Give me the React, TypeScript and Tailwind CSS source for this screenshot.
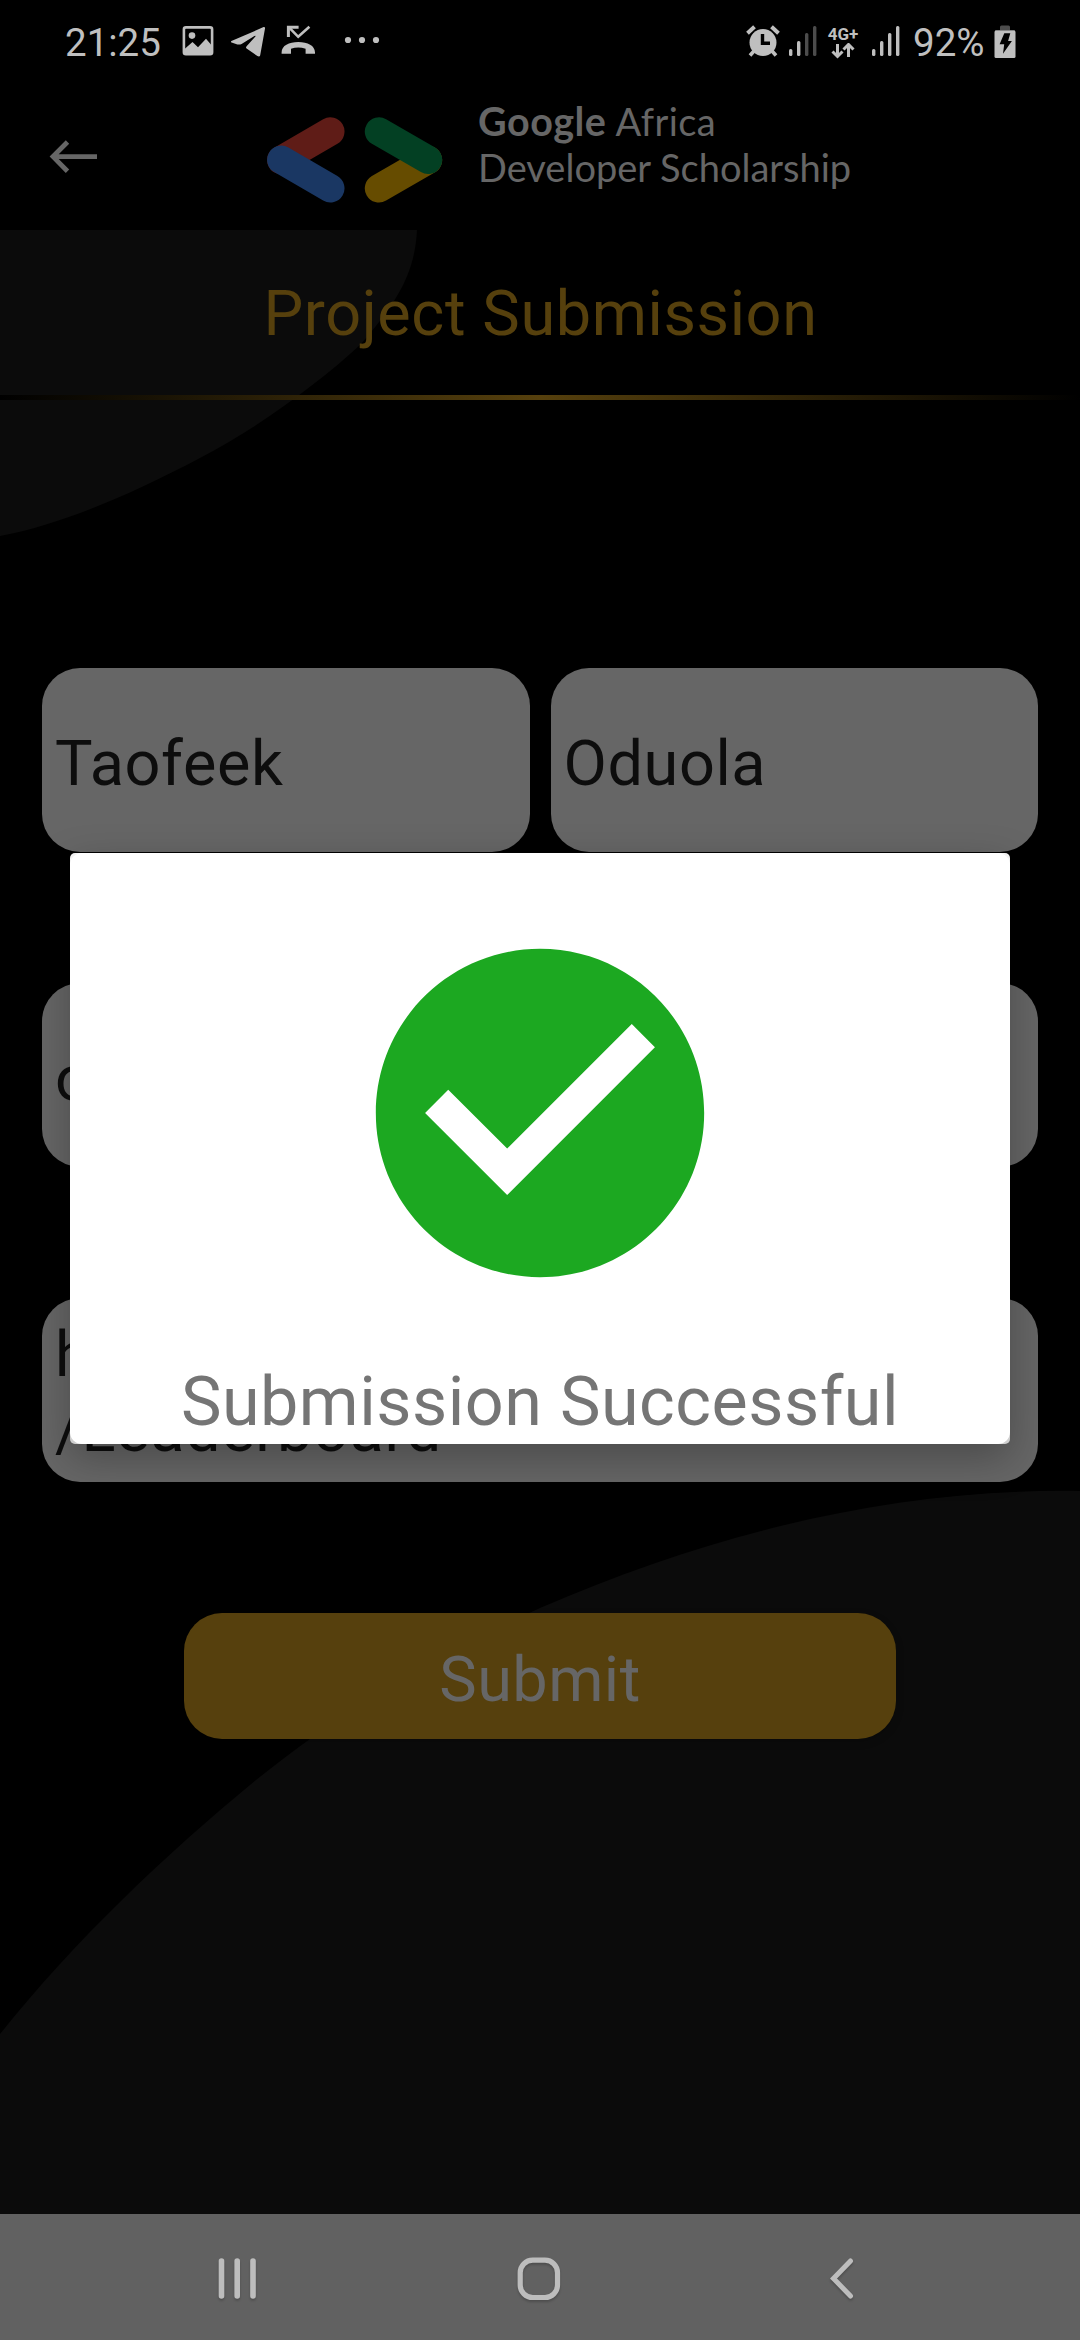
import type { ReactNode } from "react";

const STATUS = "#bfbfbf";
const DIM = "#4c4c4c";

function SignalBars({ active, className }: { active: number; className: string }) {
  const bars = [
    { x: 0, y: 24 },
    { x: 8, y: 16 },
    { x: 16, y: 8 },
    { x: 24, y: 1 },
  ];
  return (
    <svg className={className} width="28" height="32" viewBox="0 0 28 32">
      {bars.map((b, i) => (
        <rect key={b.x} x={b.x} y={b.y} width="3.4" height={31 - b.y} rx="1.5" fill={i < active ? STATUS : DIM} />
      ))}
    </svg>
  );
}

function StatusBar() {
  return (
    <div className="flex h-[84px] items-center pl-[65px] text-[38.5px] leading-[46px] text-[#bfbfbf]">
      <span className="w-[117px] pt-[1px]">21:25</span>
      <svg className="mb-[3px]" width="32" height="30" viewBox="0 0 32 30">
        <rect x="1.9" y="1.4" width="28.2" height="26.8" rx="2" fill="none" stroke={STATUS} strokeWidth="2.6" />
        <circle cx="10" cy="9.6" r="3.3" fill={STATUS} />
        <path d="M2 23.5 10.5 16l5.5 5.2 8-8.4 6 7V28H2z" fill={STATUS} />
      </svg>
      <svg className="ml-[16px]" width="36" height="32" viewBox="0 0 36 32">
        <path
          d="M1.4 15 33.6 1.1Q35.2.6 35 2.6L30.2 29.2Q29.6 31.2 27.4 30L16.6 22.6Q15.4 21.6 16.6 20.2L25.4 10.4Q26 9.2 24.4 10L11.6 17.9Q9.6 19 7.4 18.4L1.6 16.6Q.3 15.9 1.4 15z"
          fill={STATUS}
        />
      </svg>
      <svg className="mb-[3px] ml-[15px]" width="35" height="31" viewBox="0 0 35 31">
        <path d="M8 2.4 17.2 11.8 28.4 1.8" fill="none" stroke={STATUS} strokeWidth="2.6" />
        <path d="M7.4 12V2.2h10.2" fill="none" stroke={STATUS} strokeWidth="3" />
        <path
          d="M.6 27.5C.6 20.5 8 17 17.3 17s16.7 3.5 16.7 10.5v1.3H24.600v-5Q17.300 21.300 10 23.800v5H.6z"
          fill={STATUS}
        />
      </svg>
      <svg className="mb-[4px] ml-[28px]" width="36" height="8" viewBox="0 0 36 8">
        <circle cx="4" cy="4" r="3.1" fill={STATUS} />
        <circle cx="18" cy="4" r="3.1" fill={STATUS} />
        <circle cx="32" cy="4" r="3.1" fill={STATUS} />
      </svg>

      <div className="ml-auto flex h-full items-center pr-[64px]">
        <svg className="mb-[3px]" width="34" height="32" viewBox="0 0 34 32">
          <circle cx="17" cy="17.5" r="13.5" fill={STATUS} />
          <path d="m1.500 8.200 7-6.400M32.500 8.200l-7-6.400" fill="none" stroke={STATUS} strokeWidth="4" />
          <path d="m8 26-4 4.500m22-4.500 4 4.500" fill="none" stroke={STATUS} strokeWidth="3.6" />
          <path d="M16.500 9v9.200H24" fill="none" stroke="#000" strokeWidth="3.4" />
        </svg>
        <SignalBars active={2} className="mb-[3px] ml-[9px]" />
        <div className="ml-[10px] flex w-[32px] flex-col items-center">
          <span className="text-[17px] leading-[17px] font-bold">4G+</span>
          <svg width="24" height="16" viewBox="0 0 24 16">
            <path d="M6.500 1v11M1.500 8.500l5 5 5-5M17.500 14V3M12.500 6.500l5-5 5 5" fill="none" stroke={STATUS} strokeWidth="3" />
          </svg>
        </div>
        <SignalBars active={4} className="mb-[3px] ml-[13px]" />
        <span className="ml-[13px] w-[74px] pt-[1px]">92%</span>
        <svg className="ml-[7px]" width="22" height="34" viewBox="0 0 22 34">
          <rect x="6" y="0.5" width="10" height="6" rx="1.5" fill={DIM} />
          <path d="M1 5h20v2H1z" fill={DIM} />
          <rect x="0.5" y="5.5" width="21" height="27.5" rx="1.5" fill={STATUS} />
          <path d="M10.300 8.200h6L14.100 16h3.800L9 28.800l1.200-9.600H5.600z" fill="#000" />
        </svg>
      </div>
    </div>
  );
}

function Header() {
  return (
    <header className="flex h-[146px] items-start">
      <svg className="mt-[56px] ml-[48px]" width="51" height="34" viewBox="0 0 51 34">
        <path d="M49 16.700H6M19.500 2 5 16.600 19.500 31.200" fill="none" stroke="#666" strokeWidth="4.8" />
      </svg>
      <svg className="mt-[32px] ml-[167px]" width="178" height="88" viewBox="0 0 178 88" fill="none" strokeWidth="28.4" strokeLinecap="round">
        <path d="M64.300 15.500 15.300 44" stroke="#5f1c17" />
        <path d="M15.300 43.800 64.300 72.300" stroke="#1a3763" />
        <path d="M162 44 113 72.300" stroke="#664c00" />
        <path d="M113 15.500 162 43.800" stroke="#034023" />
      </svg>
      <div className="mt-[14px] ml-[34px] font-['Lato',sans-serif] text-[38px] leading-[46px] whitespace-nowrap text-[#666]">
        <p>
          <span className="text-[39.5px] font-bold tracking-[0.5px]">Google</span>
          <span className="ml-[9px] tracking-[0.4px]">Africa</span>
        </p>
        <p>Developer Scholarship</p>
      </div>
    </header>
  );
}

function Field({ children, className }: { children: ReactNode; className: string }) {
  return (
    <div
      className={`flex h-[184px] items-center rounded-[38px] bg-[#666] pl-[13px] text-[63px] leading-[75px] tracking-[0.6px] text-[#0d0d0d] ${className}`}
    >
      {children}
    </div>
  );
}

function SuccessDialog() {
  return (
    <div className="absolute top-[853px] left-[70px] h-[591px] w-[940px] rounded-[5px] bg-linear-to-b from-[#f2f2f2] to-[#cfcfcf] shadow-[0_14px_42px_rgba(0,0,0,0.28)]">
      <div className="flex h-full flex-col items-center rounded-[12px] bg-white pt-[63px]">
        <svg width="394" height="394" viewBox="0 0 24 24">
          <path
            d="M12 2C6.480 2 2 6.480 2 12s4.480 10 10 10 10-4.480 10-10S17.520 2 12 2zm-2 15-5-5 1.410-1.410L10 14.170l7.590-7.590L19 8l-9 9z"
            fill="#1ca821"
          />
        </svg>
        <p className="mt-[52px] text-[68.25px] leading-[80px] tracking-[0.5px] text-[#757575]">Submission Successful</p>
      </div>
    </div>
  );
}

function NavBar() {
  return (
    <nav className="relative flex h-[126px] items-center bg-[#616161] text-[#bdbdbd]">
      <svg className="mt-[2px] ml-[216px] drop-shadow-[0_2px_1px_rgba(0,0,0,0.2)]" width="44" height="44" viewBox="0 0 44 44">
        <path d="M5.500 5v35M21.200 5v35M37 5v35" stroke="currentColor" strokeWidth="5.6" strokeLinecap="round" />
      </svg>
      <svg className="mt-[2px] ml-[257px] drop-shadow-[0_2px_1px_rgba(0,0,0,0.2)]" width="46" height="46" viewBox="0 0 46 46">
        <rect x="3.2" y="5.2" width="37.3" height="37.3" rx="12.5" fill="none" stroke="currentColor" strokeWidth="5.2" />
      </svg>
      <svg className="mt-[2px] ml-[264px] drop-shadow-[0_2px_1px_rgba(0,0,0,0.2)]" width="30" height="44" viewBox="0 0 30 44">
        <path d="M23.500 5 6.500 22.500 23.500 40" fill="none" stroke="currentColor" strokeWidth="5" strokeLinecap="round" />
      </svg>
    </nav>
  );
}

export default function App() {
  return (
    <div className="relative flex h-[2340px] w-[1080px] flex-col overflow-hidden bg-black font-['Roboto',sans-serif]">
      <svg className="absolute top-0 left-0" width="1080" height="2340" viewBox="0 0 1080 2340" fill="#0b0b0b">
        <path d="M0 230H417C415 272 398 302 360 345C320 382 258 428 200 458C130 495 60 525 0 536z" />
        <path d="M1080 1491C900 1488 720 1530 540 1608C440 1652 340 1712 256 1780C165 1855 75 1940 0 2034V2340H1080z" />
      </svg>

      <div className="relative flex flex-1 flex-col">
        <StatusBar />
        <Header />
        <h1 className="h-[165px] pt-[46px] pl-[1px] text-center text-[63px] leading-[75px] tracking-[0.6px] text-[#56400d]">
          Project Submission
        </h1>
        <div className="h-[5px] bg-linear-to-r/srgb from-black via-[#56400d] to-black" />

        <main className="flex flex-col gap-[131px] px-[42px] pt-[268px]">
          <div className="flex gap-[21px]">
            <Field className="flex-1 pt-[7px]">Taofeek</Field>
            <Field className="flex-1 pt-[7px]">Oduola</Field>
          </div>
          <Field className="pt-[7px]">o</Field>
          <Field className="pt-[4px]">
            <div>
              <p>h</p>
              <p>/Leaderboard</p>
            </div>
          </Field>
          <button className="mx-[142px] h-[126px] rounded-[38px] bg-[#56400d] pt-[6px] text-[63px] leading-[75px] tracking-[0.45px] text-[#666] shadow-[0_3px_8px_rgba(0,0,0,0.2)]">
            Submit
          </button>
        </main>
      </div>
      <NavBar />
      <SuccessDialog />
    </div>
  );
}
